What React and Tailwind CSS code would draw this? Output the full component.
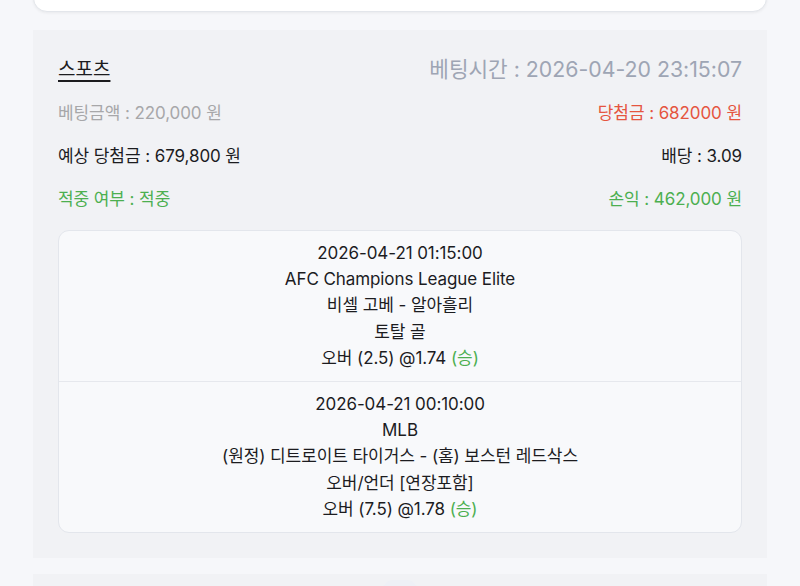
const font = { fontFamily: 'Inter, "Noto Sans CJK KR", sans-serif' }

const games = [
    {
        time: "2026-04-21 01:15:00",
        league: "AFC Champions League Elite",
        teams: "비셀 고베 - 알아흘리",
        market: "토탈 골",
        pick: "오버 (2.5) @1.74",
    },
    {
        time: "2026-04-21 00:10:00",
        league: "MLB",
        teams: "(원정) 디트로이트 타이거스 - (홈) 보스턴 레드삭스",
        market: "오버/언더 [연장포함]",
        pick: "오버 (7.5) @1.78",
    },
]

const GameRow = ({ game, last }) => {
    return (
        <div className={`flex flex-col items-center pt-[9px] pb-[10px] text-[17px] leading-[26.2px] text-[#1c1c1f] tracking-[-0.005em] ${last ? "" : "border-b-[1.5px] border-[#e6e8ed]"}`}>
            <p>{game.time}</p>
            <p>{game.league}</p>
            <p>{game.teams}</p>
            <p>{game.market}</p>
            <p>
                {game.pick} <span className="text-[#4caf50]">(승)</span>
            </p>
        </div>
    )
}

const App = () => {
    return (
        <div className="bg-[#f6f7fa] min-h-[586px] h-[586px] overflow-hidden px-[33px]" style={font}>
            <div className="h-[40px] -mt-[28px] bg-white rounded-[14px] border-[1.5px] border-[#e3e6eb] shadow-[0_1px_3px_rgba(0,0,0,0.06)]"></div>

            <div className="mt-[18px] bg-[#f1f2f5] px-[25px] pt-[26px] pb-[25px]">
                <div className="flex justify-between items-center h-[28px]">
                    <span className="text-[19px] text-[#1c1c1f] underline underline-offset-[4px] decoration-[1.5px]">스포츠</span>
                    <span className="text-[21.3px] text-[#9ea5b4]">베팅시간 : 2026-04-20 23:15:07</span>
                </div>
                <div className="mt-[8px] text-[17px] tracking-[-0.005em]">
                    <div className="flex justify-between items-center h-[43px]">
                        <span className="text-[#a7a7a9]">베팅금액 : 220,000 원</span>
                        <span className="text-[#e5553f]">당첨금 : 682000 원</span>
                    </div>
                    <div className="flex justify-between items-center h-[43px] text-[#1c1c1f]">
                        <span>예상 당첨금 : 679,800 원</span>
                        <span>배당 : 3.09</span>
                    </div>
                    <div className="flex justify-between items-center h-[43px] text-[#4caf50]">
                        <span>적중 여부 : 적중</span>
                        <span>손익 : 462,000 원</span>
                    </div>
                </div>
                <div className="mt-[9px] bg-[#f8f9fb] rounded-[11px] border-[1.5px] border-[#e3e6ec]">
                    {games.map((g, i) => (
                        <GameRow key={i} game={g} last={i === games.length - 1} />
                    ))}
                </div>
            </div>

            <div className="mt-[16px] h-[40px] bg-[#f1f2f5] flex justify-center pt-[6px]">
                <div className="w-[34px] h-[20px] rounded-full bg-[#eef0f6]"></div>
            </div>
        </div>
    )
}

export default App
